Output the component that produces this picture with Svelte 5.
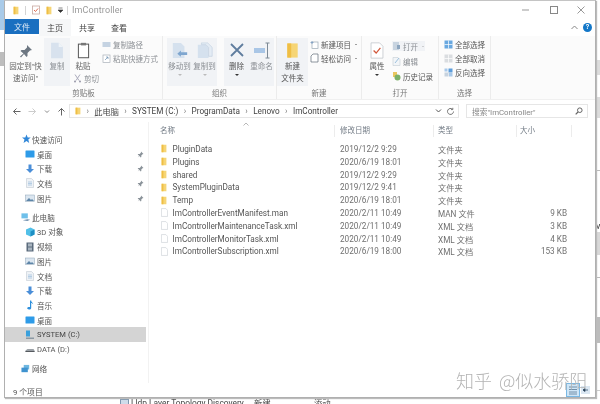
<script>
  const quick = [
    { name: "桌面", icon: "desk" },
    { name: "下载", icon: "down" },
    { name: "文档", icon: "doc" },
    { name: "图片", icon: "pic" }
  ];
  const pc = [
    { name: "3D 对象", icon: "cube" },
    { name: "视频", icon: "video" },
    { name: "图片", icon: "pic" },
    { name: "文档", icon: "doc" },
    { name: "下载", icon: "down" },
    { name: "音乐", icon: "music" },
    { name: "桌面", icon: "desk" },
    { name: "SYSTEM (C:)", icon: "sys", selected: true },
    { name: "DATA (D:)", icon: "data" }
  ];
  const files = [
    { name: "PluginData", date: "2019/12/2 9:29", type: "文件夹", size: "", dir: true },
    { name: "Plugins", date: "2020/6/19 18:01", type: "文件夹", size: "", dir: true },
    { name: "shared", date: "2019/12/2 9:29", type: "文件夹", size: "", dir: true },
    { name: "SystemPluginData", date: "2019/12/2 9:41", type: "文件夹", size: "", dir: true },
    { name: "Temp", date: "2020/6/19 18:01", type: "文件夹", size: "", dir: true },
    { name: "ImControllerEventManifest.man", date: "2020/2/11 10:49", type: "MAN 文件", size: "9 KB" },
    { name: "ImControllerMaintenanceTask.xml", date: "2020/2/11 10:49", type: "XML 文档", size: "3 KB" },
    { name: "ImControllerMonitorTask.xml", date: "2020/2/11 10:49", type: "XML 文档", size: "4 KB" },
    { name: "ImControllerSubscription.xml", date: "2020/6/19 18:00", type: "XML 文档", size: "153 KB" }
  ];
  // bits of the windows behind this one, showing past its right edge
  const slivers = [
    { top: 60, height: 15, color: "#dcdcdc" },
    { top: 97, height: 21, color: "#dcdcdc" },
    { top: 170, height: 1, color: "#bbb" },
    { top: 232, height: 23, color: "#d8d8d8" },
    { top: 277, height: 1, color: "#bbb" },
    { top: 317, height: 26, color: "#bcbcbc" },
    { top: 390, height: 1, color: "#ccc" }
  ];
</script>

{#snippet folder(w, h)}
  <svg width={w} height={h} viewBox="0 0 10 12" preserveAspectRatio="none">
    <rect x="1" y="1" width="8" height="10" fill="#f6d575" />
    <rect x="1" y="1" width="3" height="10" fill="#efbe45" />
  </svg>
{/snippet}

{#snippet navIcon(kind)}
  <svg class="navicon" width="10" height="10" viewBox="0 0 10 10">
    {#if kind === "desk"}
      <rect x="0.500" y="1.500" width="9" height="7" rx="0.500" fill="#2e9be8" />
    {:else if kind === "down"}
      <path d="M3.500 0.500h3v4.500h2.500l-4 4-4-4h2.500z" fill="#4a8ed8" />
    {:else if kind === "doc"}
      <path d="M1.500 0.500h5l2 2v7h-7z" fill="#eef2f6" stroke="#c3cbd3" stroke-width="0.600" />
      <path d="M3 4h4M3 5.500h4M3 7h4" stroke="#8db4d8" stroke-width="0.600" />
    {:else if kind === "pic"}
      <rect x="0.500" y="2" width="9" height="6.500" fill="#dbe6f0" stroke="#8da3b8" stroke-width="0.500" />
      <path d="M1 8l3-3 2 2 1-1 2 2z" fill="#5d85a8" />
    {:else if kind === "cube"}
      <path d="M1 2.500l4.500-2 4 2v5l-4 2-4.500-2z" fill="#52c0e8" />
      <path d="M5.500 4.500v5l4-2v-5z" fill="#1e8fc4" />
    {:else if kind === "video"}
      <rect x="1.500" y="0.500" width="7" height="9" fill="#5b6b7c" />
      <rect x="3" y="1.500" width="4" height="3" fill="#a9b5c0" />
      <rect x="3" y="5.500" width="4" height="3" fill="#a9b5c0" />
    {:else if kind === "music"}
      <path d="M5 0.500h1.200c0 2 2 2 2 3.800-.8-1-1.300-1.200-2-1.300v5c0 1-1 1.500-2.200 1.500s-1.800-.6-1.800-1.200c0-.9 1.500-1.500 2.800-1.200z" fill="#2d8fdc" />
    {:else if kind === "sys"}
      <rect x="1" y="0.500" width="4" height="6" fill="#3aa0dc" />
      <path d="M1 7.500h8v1.500h-8z" fill="#8b98a3" />
    {:else if kind === "data"}
      <path d="M0.500 6.500l2-1.500h6l1 1.500v1.500h-9z" fill="#9aa0a6" />
      <path d="M0.500 7h9v1h-9z" fill="#55595e" />
    {/if}
  </svg>
{/snippet}

<div class="screen">
  <i class="sliver left"></i>
  <i class="sliver left2"></i>
  {#each slivers as s}
    <i class="sliver right" style="top: {s.top}px; height: {s.height}px; background: {s.color}"></i>
  {/each}
  <span class="peek">v</span>

  <div class="window">
    <div class="titlebar">
      <div class="qat">
        {@render folder(6, 9)}
        <span class="bar"></span>
        <svg width="8" height="10" viewBox="0 0 8 10"><rect x="0.500" y="1" width="7" height="8" fill="#fff" stroke="#c8a8a0" stroke-width="0.800" /><path d="M2 5l1.500 1.500 2.500-3" stroke="#dc6a50" fill="none" /></svg>
        {@render folder(6, 9)}
        <svg class="caret" width="5" height="6" viewBox="0 0 5 6"><path d="M0.500 1h4M0 3h5l-2.500 2.500z" stroke="#333" stroke-width="0.600" fill="#333" /></svg>
        <span class="bar"></span>
        <span class="wintitle">ImController</span>
      </div>
      <div class="controls">
        <svg width="10" height="10" viewBox="0 0 10 10"><path d="M1 5h7" stroke="#999" /></svg>
        <svg width="10" height="10" viewBox="0 0 10 10"><rect x="1.500" y="1.500" width="7" height="7" fill="none" stroke="#888" /></svg>
        <svg width="10" height="10" viewBox="0 0 10 10"><path d="M1.500 1.500l7 7M8.500 1.500l-7 7" stroke="#999" /></svg>
      </div>
    </div>

    <div class="tabs">
      <span class="tab file">文件</span>
      <span class="tab home">主页</span>
      <span class="tab">共享</span>
      <span class="tab">查看</span>
      <span class="spring"></span>
      <svg width="7" height="5" viewBox="0 0 7 5"><path d="M0.500 4l3-3 3 3" fill="none" stroke="#888" /></svg>
      <span class="help">?</span>
    </div>

    <div class="ribbon">
      <section class="group clip">
        <div class="items">
          <div class="big pin">
            <svg width="14" height="14" viewBox="0 0 14 14"><path d="M8 1l5 5-2 .5-2.500 2.500v3l-1 1-2.500-3-3 3.500-1-1 3.500-3-3-2.500 1-1h3l2.500-2.500z" fill="#6d7782" /></svg>
            <span>固定到"快<br />速访问"</span>
          </div>
          <div class="big shade w26">
            <svg width="14" height="17" viewBox="0 0 16 20"><path d="M1 1h9l5 5v13h-14z" fill="#d8e2ee" /><path d="M10 1l5 5h-5z" fill="#eef3f8" /></svg>
            <span class="dim">复制</span>
          </div>
          <div class="stack">
            <div class="big">
              <svg width="13" height="17" viewBox="0 0 14 20"><rect x="1" y="2.500" width="12" height="16" fill="#fff" stroke="#5a5a5a" stroke-width="1.200" /><rect x="4" y="1" width="6" height="3" fill="#777" /></svg>
              <span>粘贴</span>
            </div>
            <div class="line cut">
              <svg width="9" height="9" viewBox="0 0 9 9"><path d="M2 0.500l4 6M7 0.500l-4 6" stroke="#aab" fill="none" /><circle cx="2" cy="7.500" r="1" fill="#99a" /><circle cx="7" cy="7.500" r="1" fill="#99a" /></svg>
              <span class="dim">剪切</span>
            </div>
          </div>
          <div class="lines paths">
            <div class="line">
              <svg width="9" height="9" viewBox="0 0 9 9"><rect x="0.500" y="2" width="8" height="5" fill="#c5d3e2" /></svg>
              <span class="dim">复制路径</span>
            </div>
            <div class="line">
              <svg width="9" height="9" viewBox="0 0 9 9"><rect x="1" y="1" width="7" height="7.500" fill="#fff" stroke="#a8b0b8" stroke-width="0.700" /><path d="M3 6l3-3M4 3h2v2" stroke="#6d8fb0" stroke-width="0.700" fill="none" /></svg>
              <span class="dim">粘贴快捷方式</span>
            </div>
          </div>
        </div>
        <div class="label">剪贴板</div>
      </section>

      <section class="group org">
        <div class="items">
          <div class="shadebox">
            <div class="big w25">
              <svg width="18" height="19" viewBox="0 0 18 19"><path d="M1 1h9l4 4v13h-13z" fill="#d5e1ee" /><path d="M6 13l4-3.500v2h7v3h-7v2z" fill="#7fa6cf" /></svg>
              <span class="dim">移动到</span><i class="drop faint"></i>
            </div>
            <div class="big w25">
              <svg width="18" height="19" viewBox="0 0 18 19"><path d="M1 3h9l3 3v12h-12z" fill="#d5e1ee" /><path d="M5 1h7l5 5v10h-4v-10l-3-3h-5z" fill="#e4ecf4" stroke="#b8c9db" stroke-width="0.600" /></svg>
              <span class="dim">复制到</span><i class="drop faint"></i>
            </div>
          </div>
          <div class="shadebox del">
            <div class="big w25">
              <svg width="16" height="17" viewBox="0 0 16 17"><path d="M2 2l12 12M14 2l-12 12" stroke="#5f7d9e" stroke-width="1.800" /></svg>
              <span class="dark">删除</span><i class="drop"></i>
            </div>
            <div class="big w25">
              <svg width="18" height="17" viewBox="0 0 18 17"><rect x="1" y="6" width="11" height="5" fill="#a9c6e6" /><path d="M12.500 1h4M12.500 16h4M14.500 1v15" stroke="#7d8a96" stroke-width="1" /></svg>
              <span class="dim">重命名</span>
            </div>
          </div>
        </div>
        <div class="label">组织</div>
      </section>

      <section class="group mk">
        <div class="items">
          <div class="big w30 shade">
            {@render folder(13, 17)}
            <span class="dark">新建<br />文件夹</span>
          </div>
          <div class="lines tight">
            <div class="line">
              <svg width="9" height="9" viewBox="0 0 9 9"><rect x="2" y="2" width="6" height="6.500" fill="#fff" stroke="#9aa8b4" stroke-width="0.700" /><path d="M0.500 2.500h3M2 1v3" stroke="#7b9cc0" stroke-width="0.800" /></svg>
              <span class="dark">新建项目</span><i class="tri"></i>
            </div>
            <div class="line">
              <svg width="9" height="10" viewBox="0 0 9 10"><path d="M3 1h5v8h-7v-6z" fill="#fff" stroke="#5f6b75" stroke-width="0.700" /></svg>
              <span class="dark">轻松访问</span><i class="tri"></i>
            </div>
          </div>
        </div>
        <div class="label">新建</div>
      </section>

      <section class="group opn">
        <div class="items">
          <div class="big w24">
            <svg width="14" height="18" viewBox="0 0 16 20"><path d="M1 1h10l4 4v14h-14z" fill="#fff" stroke="#b8bec4" stroke-width="0.800" /><path d="M4 10l3 3 5-6" stroke="#d2593c" stroke-width="1.500" fill="none" /></svg>
            <span class="dark">属性</span><i class="drop"></i>
          </div>
          <div class="lines open">
            <div class="line openbtn">
              <svg width="9" height="10" viewBox="0 0 9 10"><rect x="1" y="1" width="6" height="8" fill="#c8d4e0" /><rect x="5" y="4" width="3" height="4" fill="#8da6bf" /></svg>
              <span class="dim">打开</span><i class="tri faint"></i>
            </div>
            <div class="line">
              <svg width="9" height="10" viewBox="0 0 9 10"><path d="M1 1.500h5l2 2v6h-7z" fill="#f2f5f8" stroke="#c4ccd4" stroke-width="0.600" /><path d="M3 7l4-5" stroke="#9cc0dd" /></svg>
              <span class="dim">编辑</span>
            </div>
            <div class="line">
              <svg width="9" height="10" viewBox="0 0 9 10"><rect x="1" y="1" width="4" height="5" fill="#e8c660" /><circle cx="5.500" cy="6.500" r="3" fill="#7bb068" /></svg>
              <span class="dark">历史记录</span>
            </div>
          </div>
        </div>
        <div class="label">打开</div>
      </section>

      <section class="group sel">
        <div class="lines select">
          <div class="line">
            <svg width="9" height="9" viewBox="0 0 9 9"><path d="M0.500 0.500h8v8h-8z" fill="#69a8e0" /><path d="M4.500 0.500v8M0.500 4.500h8" stroke="#fff" stroke-width="0.700" /></svg>
            <span class="dark">全部选择</span>
          </div>
          <div class="line">
            <svg width="9" height="9" viewBox="0 0 9 9"><path d="M0.500 0.500h8v8h-8z" fill="#dadde0" /><path d="M4.500 0.500v8M0.500 4.500h8" stroke="#fff" stroke-width="0.700" /></svg>
            <span class="dark">全部取消</span>
          </div>
          <div class="line">
            <svg width="9" height="9" viewBox="0 0 9 9"><path d="M0.500 4.500h4v4h-4z" fill="#c7d3df" /><path d="M4.500 0.500h4v4h-4z" fill="#5c9ddb" /><path d="M0.500 0.500h3v3h-3zM5 5h3.500v3.500h-3.500z" fill="#a9c9e9" /></svg>
            <span class="dark">反向选择</span>
          </div>
        </div>
        <div class="label">选择</div>
      </section>
    </div>

    <div class="addressrow">
      <div class="arrows">
        <svg width="9" height="9" viewBox="0 0 9 9"><path d="M8.500 4.500h-7M4.500 1.500l-3 3 3 3" fill="none" stroke="#666" /></svg>
        <svg width="9" height="9" viewBox="0 0 9 9"><path d="M0.500 4.500h7M4.500 1.500l3 3-3 3" fill="none" stroke="#ccc" /></svg>
        <svg width="6" height="9" viewBox="0 0 6 9"><path d="M1 3.500l2 2 2-2" fill="none" stroke="#888" /></svg>
        <svg width="9" height="9" viewBox="0 0 9 9"><path d="M4.500 8.500v-7M1.500 4.500l3-3 3 3" fill="none" stroke="#666" /></svg>
      </div>
      <div class="address">
        {@render folder(6, 8)}
        <span class="sep">›</span><span>此电脑</span>
        <span class="sep">›</span><span>SYSTEM (C:)</span>
        <span class="sep">›</span><span>ProgramData</span>
        <span class="sep">›</span><span>Lenovo</span>
        <span class="sep">›</span><span>ImController</span>
        <span class="spring"></span>
        <svg width="7" height="6" viewBox="0 0 7 6"><path d="M1 1.500l2.500 2.500 2.500-2.500" fill="none" stroke="#555" /></svg>
        <svg class="refresh" width="9" height="9" viewBox="0 0 9 9"><path d="M7.500 4.500a3 3 0 1 1-1-2.300M6.800 0.800v1.800h-1.800" fill="none" stroke="#777" /></svg>
      </div>
      <div class="search">
        <span>搜索"ImController"</span>
        <svg width="8" height="8" viewBox="0 0 8 8"><circle cx="4.800" cy="3.200" r="2.300" fill="none" stroke="#666" /><path d="M3 5l-2.300 2.300" stroke="#666" stroke-width="1.200" /></svg>
      </div>
    </div>

    <div class="main">
      <nav class="sidebar">
        <div class="navrow head">
          <svg class="navicon" width="10" height="10" viewBox="0 0 10 10"><path d="M5.500 0.500l1.200 3h3l-2.400 2 .9 3.500-2.700-2-3 2 1-3.500-2.500-2h3.300z" fill="#2f86d8" /></svg>
          <span>快速访问</span>
        </div>
        {#each quick as item}
          <div class="navrow">
            {@render navIcon(item.icon)}
            <span>{item.name}</span>
            <svg class="tack" width="7" height="7" viewBox="0 0 7 7"><path d="M4 0.500l2.500 2.500-1 .3-1.200 1.200v1.500l-.6.500-1.200-1.500-1.800 1.500 1.500-1.800-1.500-1.200.5-.6h1.500l1.200-1.200z" fill="#8a9299" /></svg>
          </div>
        {/each}
        <div class="navrow head gap">
          <svg class="navicon" width="10" height="10" viewBox="0 0 11 10"><rect x="0.500" y="1" width="7" height="5.500" fill="#6fc0ea" /><path d="M2 8.500l5-1 3 .5-3 1.500z" fill="#6f8fae" /></svg>
          <span>此电脑</span>
        </div>
        {#each pc as item}
          <div class="navrow" class:selected={item.selected}>
            {@render navIcon(item.icon)}
            <span>{item.name}</span>
          </div>
        {/each}
        <div class="navrow head gap">
          <svg class="navicon" width="10" height="10" viewBox="0 0 11 10"><rect x="3" y="0.500" width="6" height="5" fill="#6fb7e0" /><rect x="0.500" y="3.500" width="7" height="5" fill="#3f93cf" /></svg>
          <span>网络</span>
        </div>
      </nav>

      <div class="content">
        <div class="sortmark">
          <svg width="6" height="4" viewBox="0 0 6 4"><path d="M0.500 3.500l2.500-2.500 2.500 2.500" fill="none" stroke="#999" stroke-width="0.700" /></svg>
        </div>
        <div class="row header">
          <span class="h-name">名称</span>
          <span class="h-date">修改日期</span>
          <span class="h-type">类型</span>
          <span class="h-size">大小</span>
        </div>
        <div class="list">
          {#each files as f}
            <div class="row">
              <span class="c-icon">
                {#if f.dir}
                  {@render folder(6, 9)}
                {:else}
                  <svg width="7" height="9" viewBox="0 0 8 10"><path d="M0.500 0.500h5l2 2v7h-7z" fill="#fff" stroke="#c9ced3" stroke-width="0.700" /></svg>
                {/if}
              </span>
              <span class="c-file">{f.name}</span>
              <span class="c-date">{f.date}</span>
              <span class="c-type">{f.type}</span>
              <span class="c-bytes">{f.size}</span>
            </div>
          {/each}
        </div>
      </div>
    </div>

    <div class="status">
      <span>9 个项目</span>
      <div class="views">
        <svg width="14" height="14" viewBox="0 0 14 14"><rect x="0.500" y="0.500" width="13" height="13" fill="#cfe6f7" stroke="#79b8e4" /><path d="M3 4h8M3 6.500h8M3 9h8M3 11h8" stroke="#5a7a94" stroke-width="0.800" /></svg>
        <svg width="9" height="8" viewBox="0 0 9 8"><rect width="9" height="8" fill="#dbe7f2" /><path d="M2 4h5M2 4l2-1.500v3z" stroke="#33506c" stroke-width="0.800" /></svg>
      </div>
    </div>
  </div>

  <div class="behind">
    <svg width="9" height="9" viewBox="0 0 9 9"><rect x="0.500" y="0.500" width="8" height="8" fill="#cfdcea" stroke="#7e97b0" /></svg>
    <span class="b-name">Lldp Layer Topology Discovery</span>
    <span class="b-state">新建</span>
    <span>添动</span>
  </div>
  <div class="mark">知乎 @似水骄阳</div>
</div>

<style>
  :global(body) {
    margin: 0;
    background: #fff;
  }

  .screen {
    position: relative;
    width: 600px;
    height: 404px;
    overflow: hidden;
    background: #fff;
    font-family: Roboto, "Noto Sans CJK SC", sans-serif;
    font-size: 7.500px;
    color: #555;
    filter: blur(0.4px);
  }

  .window {
    display: flex;
    flex-direction: column;
    box-sizing: border-box;
    margin-left: 4px;
    width: 592px;
    height: 398px;
    background: #fff;
    border: 1px solid #b0b0b0;
    border-top-color: #c4c4c4;
    box-shadow: 1px 1px 1px #bbb;
    position: relative;
    z-index: 1;
  }

  svg {
    flex: none;
    display: block;
  }

  .titlebar {
    display: flex;
    align-items: center;
    justify-content: space-between;
    height: 18px;
    flex: none;
  }

  .qat {
    display: flex;
    align-items: center;
    gap: 6px;
    padding-left: 8px;
  }

  .bar {
    width: 1px;
    height: 9px;
    background: #d4d4d4;
  }

  .caret {
    margin-right: -2px;
  }

  .wintitle {
    margin-left: -2px;
    color: #9a9a9a;
    font-size: 9px;
    letter-spacing: 0.100px;
  }

  .controls {
    display: flex;
    gap: 17.500px;
    padding-right: 9px;
  }

  .tabs {
    display: flex;
    align-items: center;
    height: 17px;
    flex: none;
    padding-right: 3px;
  }

  .tab {
    width: 32px;
    height: 100%;
    display: flex;
    align-items: center;
    justify-content: center;
    color: #444;
    font-size: 8px;
  }

  .tab.file {
    width: 34px;
    height: 15px;
    align-self: flex-start;
    background: #1a6fc0;
    color: #dfeaf6;
  }

  .tab.home {
    background: #f6f7f8;
  }

  .spring {
    flex: 1;
  }

  .help {
    margin-left: 5px;
    width: 9px;
    height: 9px;
    border-radius: 50%;
    background: #1377c8;
    color: #fff;
    font-size: 7px;
    font-weight: 700;
    line-height: 9px;
    text-align: center;
  }

  .ribbon {
    display: flex;
    flex: none;
    height: 64px;
    background: #fbfbfb;
    border-bottom: 1px solid #f0f0f0;
    box-sizing: border-box;
  }

  .group {
    display: flex;
    flex-direction: column;
    box-sizing: border-box;
    height: 63px;
    border-right: 1px solid #ececec;
  }

  .clip { width: 158px; }
  .org { width: 114px; }
  .mk { width: 85px; }
  .opn { width: 77px; }
  .sel { width: 52px; }

  .items {
    display: flex;
    height: 52px;
    flex: none;
    gap: 1px;
    padding-top: 2px;
    box-sizing: border-box;
  }

  .label {
    height: 11px;
    line-height: 11px;
    text-align: center;
    color: #777;
  }

  .big {
    position: relative;
    display: flex;
    flex-direction: column;
    align-items: center;
    padding-top: 4px;
    line-height: 12px;
    color: #666;
    text-align: center;
    box-sizing: border-box;
  }

  .big svg {
    height: 17px;
    margin-bottom: 2px;
  }

  .pin {
    width: 35px;
    margin-left: 3px;
  }

  .pin svg {
    margin-top: 2px;
    height: 14px;
    margin-bottom: 3px;
  }

  .w24 { width: 24px; margin-left: 3px; }
  .w25 { width: 25px; }
  .w26 { width: 26px; }
  .w30 { width: 31px; }

  .shade,
  .shadebox {
    background: #f1f3f6;
    height: 48px;
  }

  .shadebox {
    display: flex;
    margin-left: 4px;
  }

  .del {
    margin-left: 6px;
  }

  .stack {
    display: flex;
    flex-direction: column;
    width: 24px;
  }

  .stack .big {
    height: 35px;
  }

  .dim {
    color: #8b8f94;
  }

  .dark {
    color: #555;
  }

  .drop {
    width: 0;
    height: 0;
    border: 2px solid transparent;
    border-top-color: #333;
    border-bottom: 0;
    margin-top: 1px;
  }

  .drop.faint {
    border-top-color: #bbb;
  }

  .lines {
    display: flex;
    flex-direction: column;
    gap: 4px;
    padding-top: 1px;
  }

  .line {
    display: flex;
    align-items: center;
    gap: 2px;
    height: 10px;
    white-space: nowrap;
  }

  .cut {
    padding-left: 2px;
  }

  .paths {
    padding-left: 6px;
  }

  .tight {
    padding-left: 1px;
  }

  .open {
    padding-left: 2px;
    padding-top: 3px;
    gap: 5px;
  }

  .openbtn {
    background: #f1f3f6;
    width: 33px;
  }

  .select {
    padding-left: 5px;
    padding-top: 3px;
    height: 52px;
    box-sizing: border-box;
    flex: none;
  }

  .tri {
    width: 0;
    height: 0;
    margin-left: 2px;
    border: 1.500px solid transparent;
    border-top-color: #444;
    border-bottom: 0;
  }

  .tri.faint {
    border-top-color: #aaa;
  }

  .addressrow {
    display: flex;
    align-items: center;
    height: 22px;
    flex: none;
    padding-right: 7px;
    box-sizing: border-box;
  }

  .arrows {
    display: flex;
    align-items: center;
    gap: 7px;
    width: 64px;
    flex: none;
    padding-left: 7px;
    box-sizing: border-box;
  }

  .address {
    display: flex;
    align-items: center;
    gap: 5.400px;
    flex: 1;
    height: 14px;
    border: 1px solid #e6e6e6;
    padding: 0 3px 0 5px;
    box-sizing: border-box;
    font-size: 8.200px;
    color: #444;
  }

  .sep {
    color: #777;
  }

  .refresh {
    margin-left: -1px;
  }

  .search {
    display: flex;
    align-items: center;
    justify-content: space-between;
    width: 122px;
    height: 14px;
    margin-left: 7px;
    border: 1px solid #e6e6e6;
    padding: 0 4px 0 5px;
    box-sizing: border-box;
    color: #888;
    font-size: 7.800px;
  }

  .main {
    display: flex;
    flex: 1;
    min-height: 0;
  }

  .sidebar {
    width: 143px;
    flex: none;
    padding-top: 10px;
    border-right: 1px solid #f2f2f2;
  }

  .navrow {
    display: flex;
    align-items: center;
    gap: 2px;
    height: 14.700px;
    padding: 0 4px 0 20px;
    font-size: 7.600px;
    color: #555;
  }

  .navrow span {
    flex: 1;
  }

  .navrow.head {
    padding-left: 16px;
    gap: 1px;
  }

  .navrow.gap {
    margin-top: 4.500px;
  }

  .selected {
    margin-right: 2px;
    background: #d4d4d4;
    color: #444;
  }

  .content {
    position: relative;
    flex: 1;
    padding-top: 3px;
  }

  .sortmark {
    position: absolute;
    left: 94px;
    top: 0;
  }

  .row {
    display: flex;
    align-items: center;
    height: 12.800px;
    font-size: 8.200px;
    color: #555;
    white-space: nowrap;
  }

  .header {
    height: 12px;
    margin-bottom: 5.600px;
    color: #717a84;
    font-size: 7.500px;
  }

  .header span {
    box-sizing: border-box;
    flex: none;
    border-right: 1px solid #ececec;
    line-height: 12px;
  }

  .h-name {
    width: 186px;
    padding-left: 11px;
  }

  .h-date {
    width: 99px;
    padding-left: 5px;
  }

  .h-type {
    width: 83px;
    padding-left: 4px;
  }

  .h-size {
    width: 55px;
    padding-left: 3px;
  }

  .c-icon {
    width: 11.500px;
    padding-left: 12px;
    flex: none;
  }

  .c-file {
    width: 167.500px;
    flex: none;
  }

  .c-date {
    width: 98px;
    flex: none;
    color: #707070;
  }

  .c-type {
    width: 80px;
    flex: none;
    color: #707070;
  }

  .c-bytes {
    width: 49px;
    flex: none;
    text-align: right;
    color: #707070;
  }

  .status {
    display: flex;
    align-items: center;
    justify-content: space-between;
    flex: none;
    height: 12px;
    padding: 2px 5px 0 8px;
    font-size: 7.800px;
    color: #555;
  }

  .views {
    display: flex;
    align-items: center;
    gap: 1px;
    margin-top: -3px;
  }

  .behind {
    position: absolute;
    left: 120px;
    top: 398px;
    display: flex;
    align-items: center;
    gap: 2px;
    font-size: 8.400px;
    line-height: 10px;
    color: #444;
    white-space: nowrap;
  }

  .behind span {
    flex: none;
  }

  .b-name {
    width: 121px;
  }

  .b-state {
    width: 58px;
  }

  .sliver {
    position: absolute;
    display: block;
  }

  .left {
    left: 0;
    top: 0;
    width: 4px;
    height: 30px;
    background: #a9cbe9;
  }

  .left2 {
    left: 0;
    top: 52px;
    width: 4px;
    height: 14px;
    background: #bdbdbd;
  }

  .right {
    left: 596px;
    width: 4px;
  }

  .peek {
    position: absolute;
    left: 596px;
    top: 221px;
    font-size: 9px;
    line-height: 11px;
    color: #333;
  }

  .mark {
    position: absolute;
    z-index: 2;
    left: 456px;
    top: 369px;
    font-size: 18px;
    line-height: 22px;
    word-spacing: 3px;
    color: #b4b4b4;
    font-family: "Noto Sans CJK SC", sans-serif;
    font-weight: 300;
    white-space: nowrap;
  }
</style>
